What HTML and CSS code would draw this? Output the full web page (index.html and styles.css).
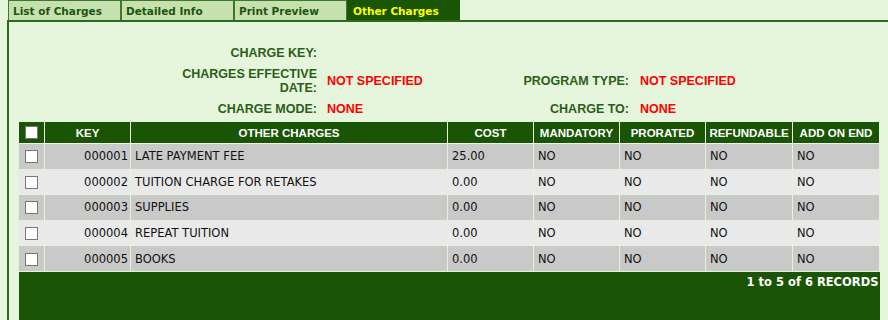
FILE: index.html
```html
<!DOCTYPE html>
<html lang="en">
<head>
    <meta charset="UTF-8">
    <title>Other Charges</title>
    <link rel="stylesheet" href="styles.css">
</head>
<body>
    <!-- Tab strip -->
    <div class="tabs">
        <a href="#" class="tab">List of Charges</a>
        <a href="#" class="tab">Detailed Info</a>
        <a href="#" class="tab">Print Preview</a>
        <a href="#" class="tab active">Other Charges</a>
    </div>

    <div class="panel">
        <!-- Charge header info -->
        <div class="info">
            <div class="lbl">CHARGE KEY:</div>
            <div class="val"></div>
            <div class="lbl2"></div>
            <div class="val2"></div>

            <div class="lbl">CHARGES EFFECTIVE DATE:</div>
            <div class="val">NOT SPECIFIED</div>
            <div class="lbl2">PROGRAM TYPE:</div>
            <div class="val2">NOT SPECIFIED</div>

            <div class="lbl">CHARGE MODE:</div>
            <div class="val">NONE</div>
            <div class="lbl2">CHARGE TO:</div>
            <div class="val2">NONE</div>
        </div>

        <!-- Other charges grid -->
        <table class="grid">
            <colgroup>
                <col style="width:26px">
                <col style="width:86px">
                <col style="width:317px">
                <col style="width:86px">
                <col style="width:86px">
                <col style="width:86px">
                <col style="width:87px">
                <col style="width:87px">
            </colgroup>
            <thead>
                <tr>
                    <th><span class="chk"></span></th>
                    <th>KEY</th>
                    <th>OTHER CHARGES</th>
                    <th>COST</th>
                    <th>MANDATORY</th>
                    <th>PRORATED</th>
                    <th>REFUNDABLE</th>
                    <th>ADD ON END</th>
                </tr>
            </thead>
            <tbody id="rows"></tbody>
            <tfoot>
                <tr>
                    <td colspan="8">1 to 5 of 6 RECORDS</td>
                </tr>
            </tfoot>
        </table>
    </div>

    <script>
        const charges = [
            { key: "000001", name: "LATE PAYMENT FEE", cost: "25.00" },
            { key: "000002", name: "TUITION CHARGE FOR RETAKES", cost: "0.00" },
            { key: "000003", name: "SUPPLIES", cost: "0.00" },
            { key: "000004", name: "REPEAT TUITION", cost: "0.00" },
            { key: "000005", name: "BOOKS", cost: "0.00" }
        ];

        const rows = document.getElementById("rows");
        charges.forEach((c) => {
            const tr = document.createElement("tr");
            tr.innerHTML = `<td class="c"><span class="chk"></span></td>
                <td class="key">${c.key}</td>
                <td>${c.name}</td>
                <td>${c.cost}</td>
                <td>NO</td><td>NO</td><td>NO</td><td>NO</td>`;
            rows.appendChild(tr);
        });
    </script>
</body>
</html>
```

FILE: styles.css
```css
body {
    margin: 0 0 0 7px;
    background-color: #e6f6dc;
    font-family: "DejaVu Sans", Verdana, sans-serif;
    overflow: hidden;
}

/* Tabs */
.tabs {
    display: flex;
    padding-left: 1px;
    border-bottom: 2px solid #2d6a1f;
}

.tab {
    box-sizing: border-box;
    width: 113px;
    height: 20px;
    padding: 4px 0 0 4px;
    background-color: #c7e0b0;
    border: 1px solid #3a7a28;
    border-bottom: none;
    color: #1c560b;
    font-size: 10.5px;
    font-weight: bold;
    text-decoration: none;
}

.tab.active {
    background-color: #1a5505;
    border-color: #1a5505;
    color: #ffff00;
    padding-left: 5px;
}

/* Panel */
.panel {
    border-left: 2px solid #2d6a1f;
    padding: 24px 0 0 9px;
    height: 400px;
}

.info {
    display: grid;
    grid-template-columns: 140px 160px 149px auto;
    row-gap: 7px;
    align-items: center;
    margin-left: 162px;
    font-family: "Liberation Sans", Arial, sans-serif;
    font-size: 12.5px;
    font-weight: bold;
    line-height: 14px;
}

.lbl, .lbl2 {
    color: #2b5e19;
    text-align: right;
}

.lbl {
    padding-right: 3px;
}

.val {
    color: #ff0000;
    padding-left: 7px;
}

.val2 {
    color: #ff0000;
    padding-left: 11px;
}

/* Grid */
.grid {
    table-layout: fixed;
    width: 861px;
    border-collapse: collapse;
    margin-top: 6px;
}

.grid th {
    height: 21px;
    padding: 0;
    background-color: #1a5505;
    border: 1px solid #eef7e8;
    border-top: none;
    color: #fff;
    font-family: "Liberation Sans", Arial, sans-serif;
    font-size: 11.5px;
    font-weight: bold;
    text-align: center;
}

.grid td {
    height: 24.6px;
    padding: 0 0 0 4px;
    border: 1px solid #e2f3d8;
    color: #111;
    font-size: 11.5px;
    white-space: nowrap;
    overflow: hidden;
}

.grid tbody tr:nth-child(odd) td {
    background-color: #c9c9c9;
}

.grid tbody tr:nth-child(even) td {
    background-color: #e9e9e9;
}

.grid td.c {
    padding: 0;
    text-align: center;
}

.grid td.key {
    padding: 0 2px 0 0;
    text-align: right;
}

.chk {
    display: inline-block;
    box-sizing: border-box;
    width: 13px;
    height: 13px;
    background-color: #fff;
    border: 1px solid #777;
    vertical-align: middle;
}

.grid tfoot td {
    height: 60px;
    padding: 3px 1px 0 0;
    background-color: #1a5505;
    border: none;
    color: #fff;
    font-weight: bold;
    text-align: right;
    vertical-align: top;
}
```
